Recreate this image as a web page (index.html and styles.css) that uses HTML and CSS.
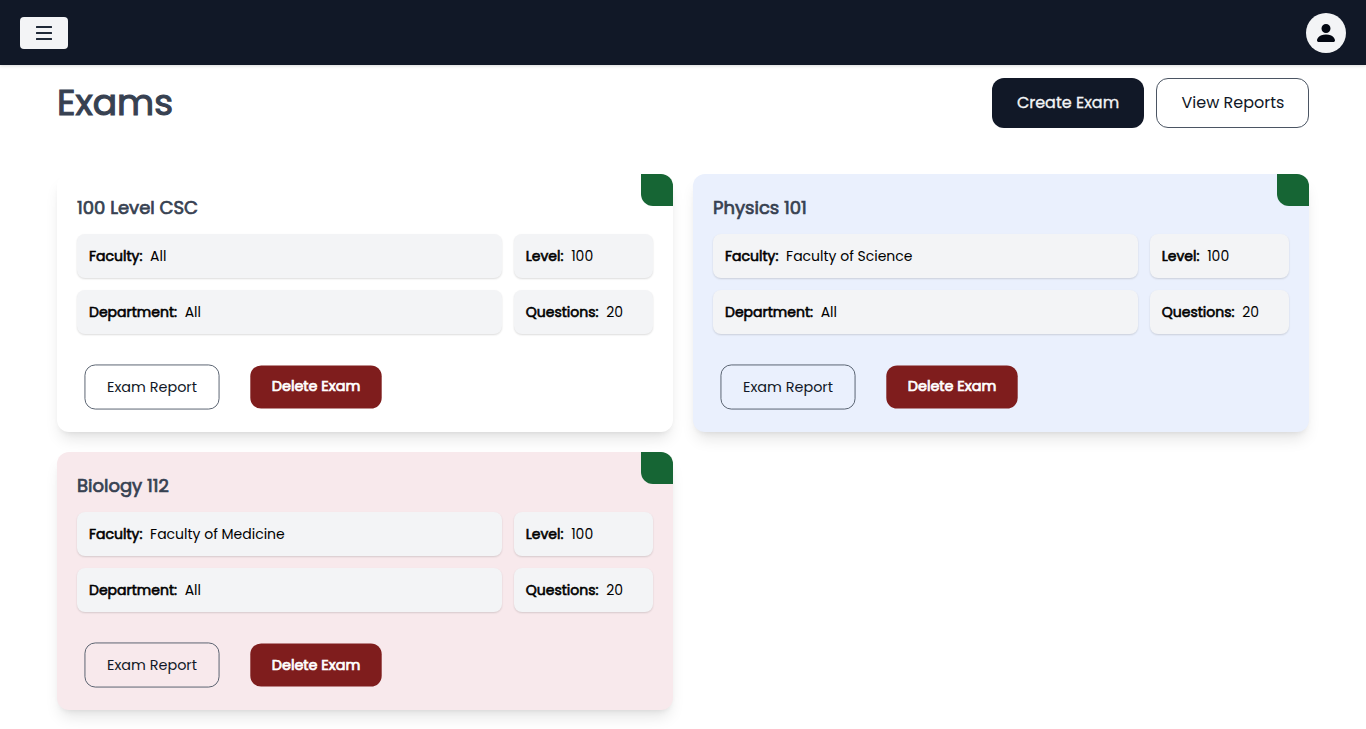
FILE: index.html
```html
<!DOCTYPE html>
<html lang="en">
<head>
<meta charset="utf-8">
<title>Exams</title>
<link rel="stylesheet" href="styles.css">
</head>
<body>
<header class="navbar">
  <button class="menu-button" aria-label="Menu">
    <svg width="16" height="16" viewBox="0 0 16 16" fill="currentColor"><path d="M.5 1h15a.5.5 0 0 1 .5.5v1a.5.5 0 0 1-.5.5H.5a.5.5 0 0 1-.5-.5v-1A.5.5 0 0 1 .5 1ZM.5 7h15a.5.5 0 0 1 .5.5v1a.5.5 0 0 1-.5.5H.5a.5.5 0 0 1-.5-.5v-1A.5.5 0 0 1 .5 7ZM.5 13h15a.5.5 0 0 1 .5.5v1a.5.5 0 0 1-.5.5H.5a.5.5 0 0 1-.5-.5v-1A.5.5 0 0 1 .5 13Z"/></svg>
  </button>
  <button class="avatar" aria-label="Account">
    <svg width="24" height="24" viewBox="0 0 16 16" fill="#030712"><path d="M3 14s-1 0-1-1 1-4 6-4 6 3 6 4-1 1-1 1H3Zm5-6a3 3 0 1 0 0-6 3 3 0 0 0 0 6Z"/></svg>
  </button>
</header>
<main class="page">
  <div class="page-head">
    <h1 class="page-title">Exams</h1>
    <div class="page-actions">
      <button class="button button-dark">Create Exam</button>
      <button class="button button-outline">View Reports</button>
    </div>
  </div>
  <section class="exam-grid">
    <article class="card">
      <span class="corner"></span>
      <h2 class="card-title">100 Level CSC</h2>
      <div class="details">
        <div class="tile"><b class="label">Faculty:</b><span>All</span></div>
        <div class="tile"><b class="label">Level:</b><span>100</span></div>
        <div class="tile"><b class="label">Department:</b><span>All</span></div>
        <div class="tile"><b class="label">Questions:</b><span>20</span></div>
      </div>
      <div class="card-actions"><button class="report">Exam Report</button><button class="delete">Delete Exam</button></div>
    </article>
    <article class="card card-blue">
      <span class="corner"></span>
      <h2 class="card-title">Physics 101</h2>
      <div class="details">
        <div class="tile"><b class="label">Faculty:</b><span>Faculty of Science</span></div>
        <div class="tile"><b class="label">Level:</b><span>100</span></div>
        <div class="tile"><b class="label">Department:</b><span>All</span></div>
        <div class="tile"><b class="label">Questions:</b><span>20</span></div>
      </div>
      <div class="card-actions"><button class="report">Exam Report</button><button class="delete">Delete Exam</button></div>
    </article>
    <article class="card card-pink">
      <span class="corner"></span>
      <h2 class="card-title">Biology 112</h2>
      <div class="details">
        <div class="tile"><b class="label">Faculty:</b><span>Faculty of Medicine</span></div>
        <div class="tile"><b class="label">Level:</b><span>100</span></div>
        <div class="tile"><b class="label">Department:</b><span>All</span></div>
        <div class="tile"><b class="label">Questions:</b><span>20</span></div>
      </div>
      <div class="card-actions"><button class="report">Exam Report</button><button class="delete">Delete Exam</button></div>
    </article>
  </section>
</main>
</body>
</html>
```
FILE: styles.css
```css
* { box-sizing: border-box; }
body { margin: 0; background: #fff; color: #000; font: 14px/20px Poppins, Inter, sans-serif; }
button { margin: 0; padding: 0; border: 0; font: inherit; white-space: nowrap; }
svg { display: block; }
.navbar { display: flex; align-items: center; justify-content: space-between; height: 65px; padding: 0 20px; background: #111827; box-shadow: 0 1px 3px rgba(0,0,0,.15); }
.menu-button { display: grid; place-items: center; width: 48px; height: 32px; margin-top: 1px; border-radius: 4px; background: #f3f4f6; color: #1f2937; }
.avatar { display: grid; place-items: center; width: 40px; height: 40px; margin-top: 1px; border-radius: 50%; background: #f3f4f6; }
.page { height: 664px; padding: 13px 57px 0; }
.page-head { display: flex; justify-content: space-between; height: 50px; }
.page-title { margin: 0; font-size: 36px; line-height: 50px; font-weight: 400; color: #374151; -webkit-text-stroke: 1.1px currentColor; }
.page-actions { display: flex; gap: 12px; }
.button { height: 50px; border-radius: 12px; font-size: 16px; }
.button-dark { width: 152px; background: #111827; color: #f3f4f6; -webkit-text-stroke: .3px currentColor; }
.button-outline { width: 153px; padding-left: 1px; border: 1px solid #4b5563; background: #fff; color: #111827; }
.exam-grid { display: grid; grid-template-columns: 1fr 1fr; gap: 20px; margin-top: 46px; }
.card { position: relative; height: 258px; padding: 20px; border-radius: 12px; background: #fff; box-shadow: 0 10px 15px -3px rgba(0,0,0,.1), 0 4px 6px -4px rgba(0,0,0,.1); }
.card-blue { background: #eaf0fd; }
.card-pink { background: #f8e9ec; }
.corner { position: absolute; top: 0; right: 0; width: 32px; height: 32px; border-radius: 0 12px; background: #166534; }
.card-title { margin: 0 0 12px; font-size: 18px; line-height: 28px; font-weight: 400; color: #374151; -webkit-text-stroke: .7px currentColor; }
.details { display: grid; grid-template-columns: 424.75px 1fr; gap: 12px; }
.tile { display: flex; align-items: center; gap: 7.7px; height: 44px; padding: 0 12px; border-radius: 8px; background: #f3f4f6; box-shadow: 0 1px 2px rgba(0,0,0,.14); }
.label { font-weight: 400; -webkit-text-stroke: .6px currentColor; }
.card-actions { display: flex; align-items: center; gap: 16px; margin-top: 28px; }
.report, .delete { border-radius: 12px; font-size: 16px; transform: scale(.9); }
.report { width: 150px; height: 50px; border: 1px solid #4b5563; background: transparent; color: #111827; }
.delete { width: 146px; height: 48px; padding-bottom: 1px; background: #7f1d1d; color: #fff; -webkit-text-stroke: .8px currentColor; }
```
